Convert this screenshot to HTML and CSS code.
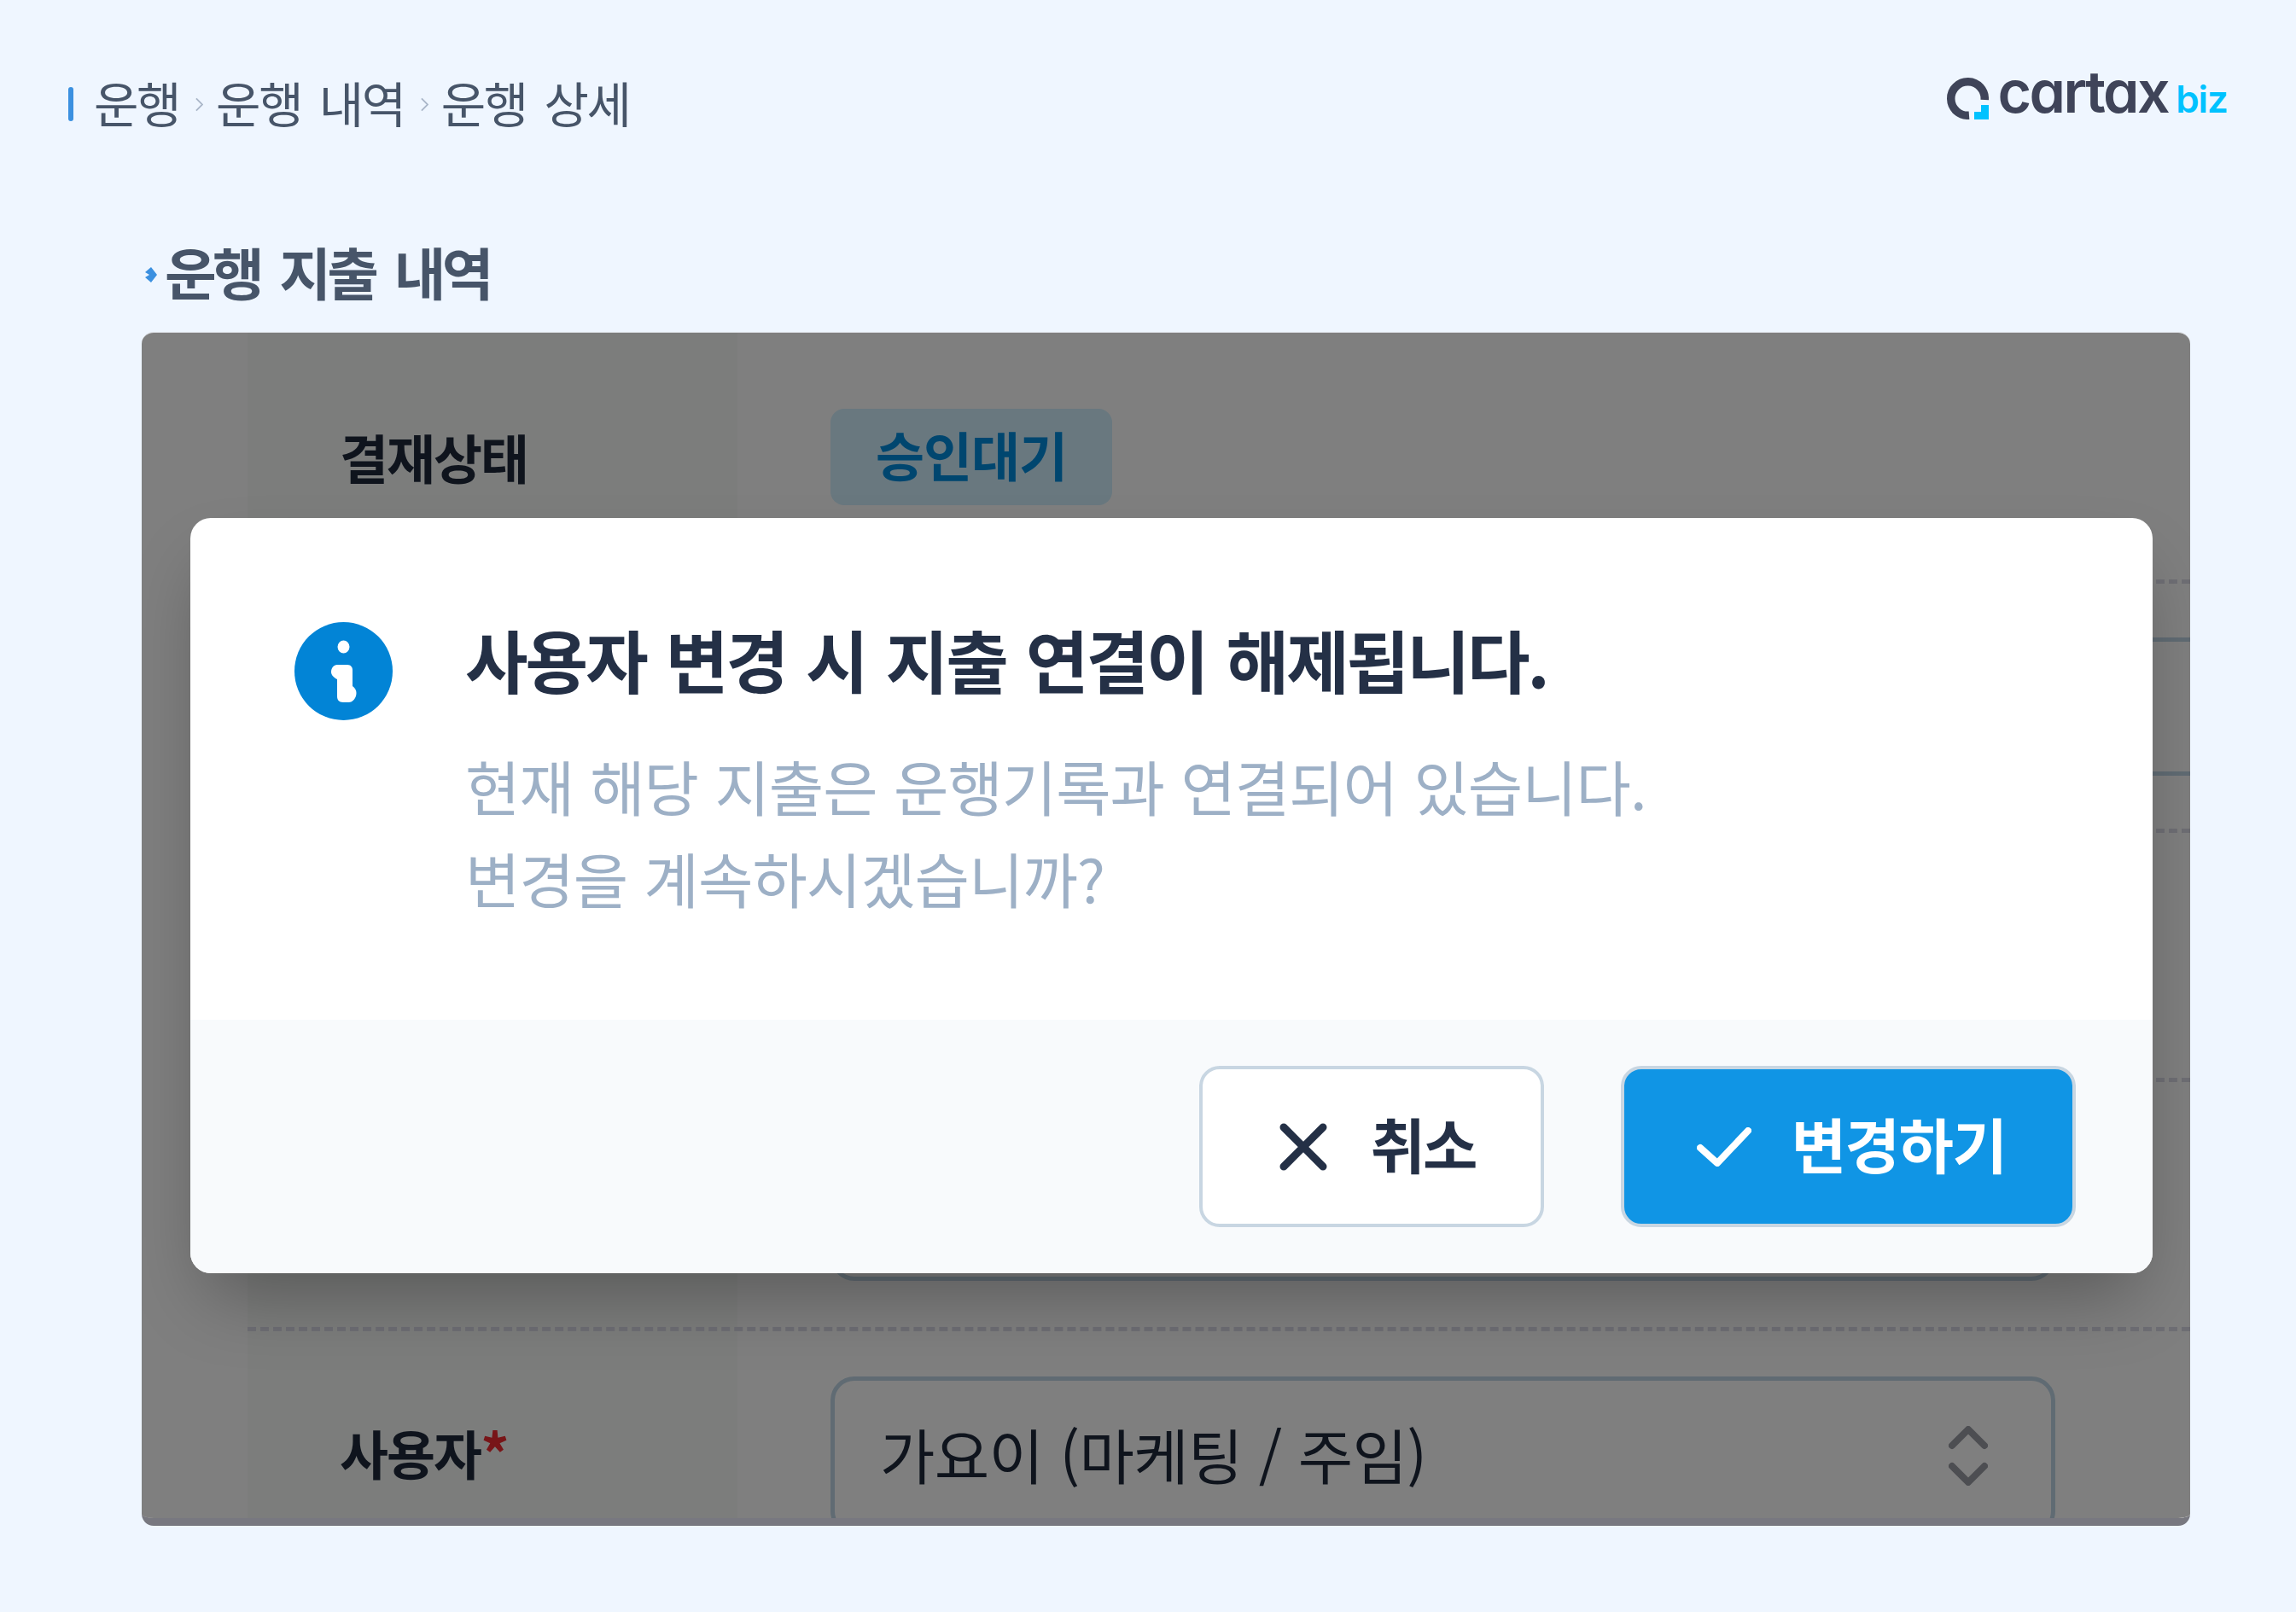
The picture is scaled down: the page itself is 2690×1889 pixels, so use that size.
FILE: index.html
```html
<!DOCTYPE html>
<html lang="ko">
<head>
  <meta charset="UTF-8" />
  <title>운행 상세</title>
  <link rel="stylesheet" href="styles.css">
</head>
<body>
  <header class="topbar">
    <nav class="crumbs">
      <span class="crumbs-bar"></span>
      <span class="crumb">운행</span>
      <svg class="crumb-sep" viewBox="0 0 10 18"><path d="M1 1l8 8-8 8"/></svg>
      <span class="crumb">운행 내역</span>
      <svg class="crumb-sep" viewBox="0 0 10 18"><path d="M1 1l8 8-8 8"/></svg>
      <span class="crumb">운행 상세</span>
    </nav>
    <div class="logo">
      <svg class="logo-mark" viewBox="0 0 49 49">
        <path class="logo-ring" d="M26 44.200A19.750 19.750 0 1 1 44.200 26"/>
        <path class="logo-corner" d="M32 40H40V32H49V49H32Z"/>
      </svg>
      <span class="logo-word">cartax</span>
      <span class="logo-biz">biz</span>
    </div>
  </header>

  <section class="section">
    <h2 class="section-title">
      <svg class="title-arrow" viewBox="0 0 14 18"><path d="M0 6L7 0l7 9-7 9-7-6 5-3z"/></svg>
      <span class="title-text">운행 지출 내역</span>
    </h2>

    <div class="panel">
      <div class="form">
        <div class="row">
          <div class="row-label">결재상태</div>
          <div class="badge">승인대기</div>
        </div>
        <div class="row">
          <div class="row-label">날짜</div>
          <div class="field field-wide"></div>
        </div>
        <div class="row"></div>
        <div class="row">
          <div class="row-label">금액</div>
          <div class="field field-tall"></div>
        </div>
        <div class="row row-last">
          <div class="row-label">사용자<span class="req">*</span></div>
          <div class="field field-select">
            <span class="select-value">가요이 (마케팅 / 주임)</span>
            <svg class="select-arrows" viewBox="0 0 46 70">
              <path d="M4 23L23 4l19 19M4 47l19 19 19-19"/>
            </svg>
          </div>
        </div>
      </div>

      <div class="overlay">
        <div class="modal">
          <div class="modal-body">
            <svg class="info-icon" viewBox="0 0 115 115">
              <circle cx="57.500" cy="57.500" r="57.500"/>
              <ellipse class="info-glyph" cx="57.500" cy="29" rx="7" ry="7.500"/>
              <path class="info-glyph" d="M50 50h12c4 0 6 3 6 6v19c3 2 4.500 5 4.500 8 0 6-4 11-9 11H57c-5 0-7-3-7-7V67c-4-2-7-5-7-8.500C43 54 46 50 50 50z"/>
            </svg>
            <div class="modal-text">
              <h3 class="modal-title">사용자 변경 시 지출 연결이 해제됩니다.</h3>
              <p class="modal-desc">현재 해당 지출은 운행기록과 연결되어 있습니다.<br>변경을 계속하시겠습니까?</p>
            </div>
          </div>
          <div class="modal-foot">
            <button class="btn btn-cancel">
              <svg class="btn-icon" viewBox="0 0 56 56"><path d="M5 5l46 46M51 5L5 51"/></svg>
              <span class="btn-label">취소</span>
            </button>
            <button class="btn btn-ok">
              <svg class="btn-icon btn-icon-check" viewBox="0 0 64 46"><path d="M4 24l20 18L60 4"/></svg>
              <span class="btn-label">변경하기</span>
            </button>
          </div>
        </div>
      </div>
    </div>
  </section>
</body>
</html>
```

FILE: styles.css
```css
* {
  box-sizing: border-box;
}

html, body {
  margin: 0;
  height: 100%;
}

body {
  width: 2690px;
  height: 1889px;
  overflow: hidden;
  background-color: #eff6ff;
  font-family: 'Noto Sans CJK KR', 'Noto Sans', sans-serif;
  color: #1e293b;
}

.topbar {
  display: flex;
  justify-content: space-between;
  align-items: flex-start;
  height: 272px;
  padding: 80px 80px 0;
}

.crumbs {
  display: flex;
  align-items: center;
  height: 84px;
  color: #475569;
  font-size: 57px;
  letter-spacing: -2.400px;
  word-spacing: 7px;
}

.crumb {
  margin-bottom: 6px;
}

.crumbs-bar {
  width: 6px;
  height: 40px;
  margin-right: 24px;
  border-radius: 3px;
  background-color: #3b90e0;
}

.crumb-sep {
  width: 9px;
  height: 17px;
  margin: 0 15px 0 19px;
  fill: none;
  stroke: #a9b6c8;
  stroke-width: 2;
}

.logo {
  display: flex;
  align-items: baseline;
  height: 60px;
  font-family: Inter, sans-serif;
  font-feature-settings: "cv11";
}

.logo-mark {
  width: 49px;
  height: 49px;
  margin-right: 10px;
  align-self: flex-end;
}

.logo-ring {
  fill: none;
  stroke: #3f4459;
  stroke-width: 9.500;
}

.logo-corner {
  fill: #00c2ff;
}

.logo-word {
  color: #3f4459;
  font-size: 68px;
  font-weight: 600;
  letter-spacing: -2.500px;
  line-height: 54px;
}

.logo-biz {
  margin-left: 9px;
  color: #00c2ff;
  font-size: 44px;
  font-weight: 600;
  letter-spacing: -1px;
  line-height: 54px;
}

.section {
  padding-left: 166px;
  width: 2566px;
}

.section-title {
  display: flex;
  align-items: center;
  gap: 9px;
  height: 100px;
  margin: 0 0 17px;
  padding-left: 4px;
  color: #475569;
  font-size: 66px;
  font-weight: 700;
  letter-spacing: -4.700px;
  word-spacing: 8.500px;
}

.title-text {
  margin-bottom: 10px;
}

.title-arrow {
  width: 14px;
  height: 18px;
  fill: #3b90e0;
}

.panel {
  position: relative;
  height: 1399px;
  overflow: hidden;
  border-top: 1px solid #d5d8dd;
  border-bottom: 9px solid #787880;
  border-radius: 14px;
  background-color: #fff;
}

.form {
  margin-left: 124px;
  padding-top: 2px;
  height: 100%;
  background: linear-gradient(to right, #f9fbf9 574px, #fff 574px);
}

.row {
  display: flex;
  align-items: center;
  height: 292px;
  padding-left: 108px;
  border-bottom: 5px dashed #dcdce8;
}

.row-last {
  border-bottom: none;
}

.row-label {
  width: 575px;
  flex: none;
  margin-bottom: 2px;
  color: #1e293b;
  font-size: 62px;
  font-weight: 700;
  letter-spacing: -2px;
}

.row-last .row-label {
  margin-bottom: 12px;
}

.req {
  color: #f02a30;
  font-size: 66px;
}

.badge {
  display: flex;
  align-items: center;
  justify-content: center;
  width: 330px;
  height: 113px;
  padding-bottom: 8px;
  border-radius: 16px;
  background-color: #d2f0ff;
  color: #008cdf;
  font-size: 62px;
  font-weight: 700;
  letter-spacing: -1px;
}

.field {
  display: flex;
  align-items: center;
  justify-content: space-between;
  width: 1435px;
  height: 162px;
  border: 5px solid #c0d6e6;
  border-radius: 28px;
}

.field-wide {
  width: 1700px;
  border-right: none;
  border-left: none;
  border-radius: 0;
}

.field-tall {
  height: 179px;
}

.field-select {
  height: 186px;
  padding: 0 74px 0 53px;
  color: #1e293b;
  font-size: 70px;
  letter-spacing: -0.600px;
}

.select-value {
  margin-bottom: 6px;
}

.select-arrows {
  width: 46px;
  height: 70px;
  fill: none;
  stroke: #9a9ca4;
  stroke-width: 8;
  stroke-linecap: round;
  stroke-linejoin: round;
}

.overlay {
  position: absolute;
  top: 0;
  left: 0;
  right: 0;
  bottom: 0;
  padding: 217px 44px 0 57px;
  background-color: rgba(0, 0, 0, 0.5);
}

.modal {
  display: flex;
  flex-direction: column;
  height: 885px;
  overflow: hidden;
  border-radius: 24px;
  background-color: #fff;
  box-shadow: 0 43px 86px -20px rgba(0, 0, 0, 0.3);
}

.modal-body {
  display: flex;
  height: 588px;
  padding: 122px 0 0 122px;
  gap: 85px;
}

.info-icon {
  width: 115px;
  height: 115px;
  flex: none;
  fill: #0284d6;
}

.info-glyph {
  fill: #fff;
}

.modal-title {
  height: 100px;
  margin: -8px 0 0;
  color: #243046;
  font-size: 80px;
  font-weight: 700;
  letter-spacing: -3px;
  word-spacing: 3.600px;
  line-height: 100px;
}

.modal-desc {
  margin: 46px 0 0;
  color: #9db0c6;
  font-size: 70px;
  letter-spacing: -1px;
  word-spacing: 0.800px;
  line-height: 108px;
}

.modal-foot {
  display: flex;
  flex: 1;
  justify-content: flex-end;
  gap: 90px;
  padding: 54px 90px 0 0;
  background-color: #f8fafc;
}

.btn {
  display: flex;
  align-items: center;
  justify-content: center;
  height: 189px;
  border: 4px solid #c8d6e2;
  border-radius: 24px;
  font-family: inherit;
  font-size: 70px;
  font-weight: 700;
}

.btn-label {
  margin-bottom: 8px;
}

.btn-cancel {
  width: 404px;
  gap: 51px;
  padding-left: 19px;
  background-color: #fff;
  color: #243046;
  letter-spacing: -3px;
}

.btn-ok {
  width: 533px;
  gap: 47px;
  padding-left: 13px;
  background-color: #1095e5;
  color: #fff;
  letter-spacing: -1.500px;
}

.btn-icon {
  width: 56px;
  height: 56px;
  fill: none;
  stroke: #243046;
  stroke-width: 9;
  stroke-linecap: round;
  stroke-linejoin: round;
}

.btn-icon-check {
  width: 64px;
  height: 46px;
  stroke: #fff;
  stroke-width: 8;
}
```
